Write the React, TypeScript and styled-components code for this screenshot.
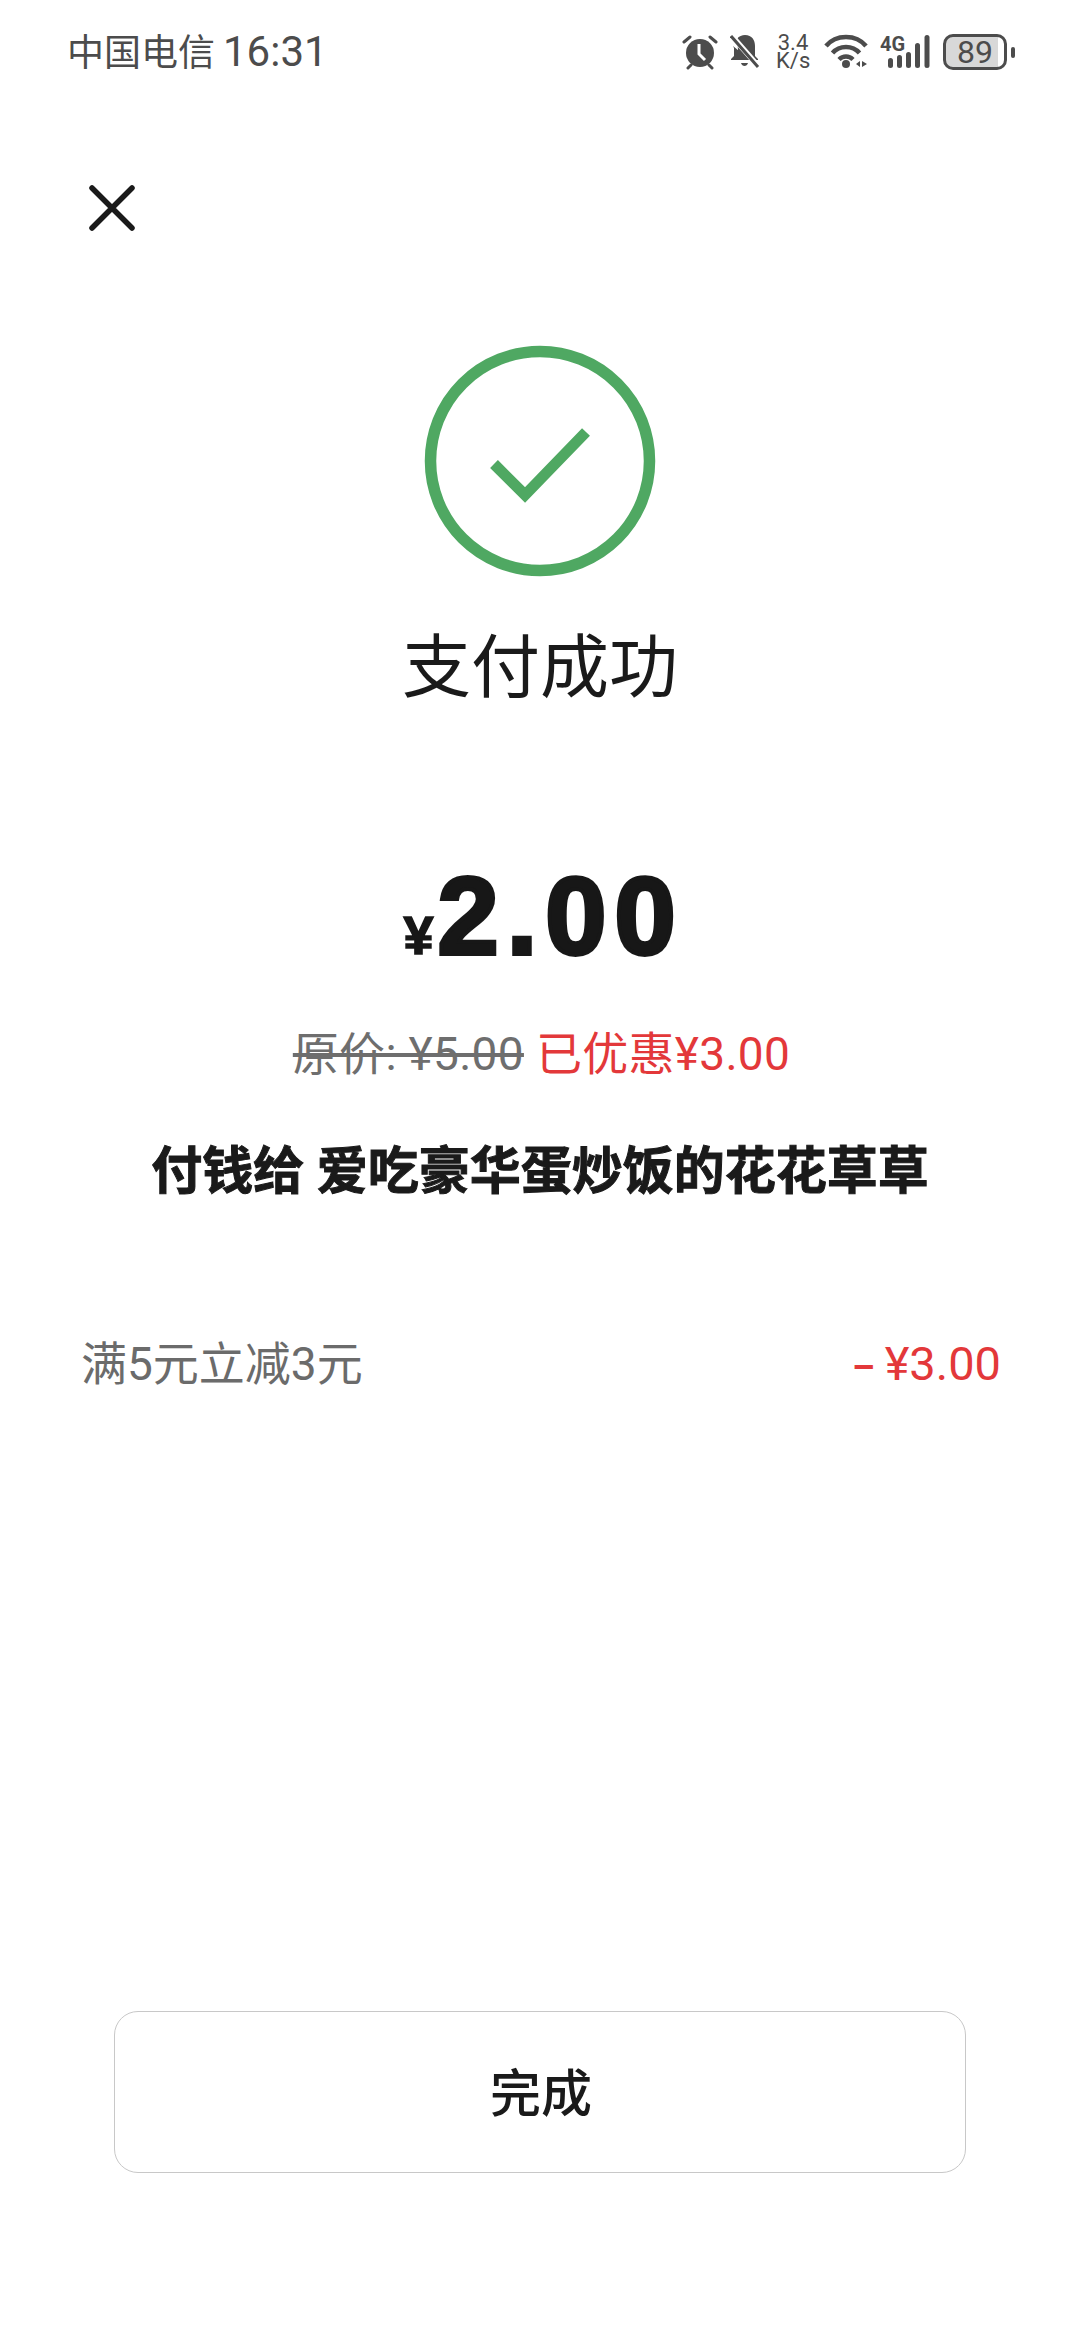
import styled, { createGlobalStyle } from 'styled-components';

const sans = `'Liberation Sans', 'Noto Sans CJK SC', sans-serif`;
const cjk = `Roboto, 'Noto Sans CJK SC', sans-serif`;

const GlobalStyle = createGlobalStyle`
  html, body {
    margin: 0;
    padding: 0;
    background: #fff;
  }
`;

const Page = styled.div`
  width: 1080px;
  height: 2340px;
  display: flex;
  flex-direction: column;
  background: #fff;
  font-family: ${cjk};
  overflow: hidden;
`;

const StatusBar = styled.div`
  height: 52px;
  margin-top: 26px;
  padding: 0 65px 0 67px;
  display: flex;
  justify-content: space-between;
  align-items: center;
  color: #4c4c4c;
`;

const Carrier = styled.div`
  margin-top: 2px;
  font-size: 37px;
  line-height: 52px;
  white-space: nowrap;
`;

const Clock = styled.span`
  margin-left: 8px;
  font-size: 42px;
`;

const StatusIcons = styled.div`
  display: flex;
  align-items: center;
`;

const NetSpeed = styled.div`
  width: 34px;
  margin: 0 14px 0 16px;
  font-size: 22px;
  line-height: 18px;
  text-align: center;
`;

const Battery = styled.div`
  width: 64px;
  height: 36px;
  margin-left: 13px;
  box-sizing: border-box;
  border: 3px solid #4c4c4c;
  border-radius: 10px;
  font-size: 32px;
  line-height: 30px;
  text-align: center;
  background: linear-gradient(to right, #d8d8d8 89%, #fff 89%);
`;

const BatteryCap = styled.div`
  width: 4px;
  height: 11px;
  margin-left: 4px;
  border-radius: 2px;
  background: #4c4c4c;
`;

const CloseButton = styled.div`
  width: 48px;
  height: 48px;
  margin: 106px 0 0 88px;
`;

const Result = styled.div`
  margin-top: 113px;
  display: flex;
  flex-direction: column;
  align-items: center;
`;

const Title = styled.h1`
  margin: 52px 0 0;
  height: 80px;
  font-size: 69px;
  line-height: 80px;
  font-weight: 400;
  color: #1a1a1a;
`;

const Amount = styled.div`
  margin-top: 146px;
  height: 122px;
  padding-left: 7px;
  display: flex;
  align-items: baseline;
  justify-content: center;
  font-family: ${sans};
  font-weight: 700;
  color: #171717;
`;

const Currency = styled.span`
  margin-right: 4px;
  font-size: 54px;
  -webkit-text-stroke: 1.5px #171717;
`;

const Integer = styled.span`
  font-size: 110px;
  line-height: 122px;
  letter-spacing: 8px;
  -webkit-text-stroke: 4px #171717;
`;

const PriceLine = styled.div`
  margin-top: 47px;
  padding-left: 3px;
  display: flex;
  gap: 12px;
  font-size: 46px;
  line-height: 60px;
  letter-spacing: 0.3px;
`;

const OldPrice = styled.span`
  color: #6e6e6e;
  text-decoration: line-through;
`;

const Saved = styled.span`
  color: #e3383a;
`;

const Payee = styled.div`
  margin-top: 56px;
  font-size: 51px;
  line-height: 64px;
  font-weight: 700;
  color: #1a1a1a;
  white-space: pre;
  -webkit-text-stroke: 1px #1a1a1a;
`;

const DiscountRow = styled.div`
  margin: 130px 79px 0 81px;
  display: flex;
  justify-content: space-between;
  font-size: 46px;
  line-height: 60px;
`;

const DiscountName = styled.span`
  color: #6b6b6b;
`;

const DiscountValue = styled.span`
  color: #e3383a;
  font-size: 47px;
`;

const Dash = styled.span`
  margin-right: 10px;
  font-size: 36px;
  font-weight: 700;
`;

const DoneButton = styled.button`
  display: block;
  flex-shrink: 0;
  width: 852px;
  height: 162px;
  margin: auto 0 167px 114px;
  padding: 0 0 4px 2px;
  box-sizing: border-box;
  border: 1px solid #c8c8c8;
  border-radius: 24px;
  background: #fff;
  font-family: ${cjk};
  font-size: 51px;
  font-weight: 500;
  color: #1a1a1a;
`;

export default function App() {
  return (
    <Page>
      <GlobalStyle />
      <StatusBar>
        <Carrier>
          中国电信<Clock>16:31</Clock>
        </Carrier>
        <StatusIcons>
          <svg width="36" height="38" viewBox="0 0 36 38" fill="#4c4c4c" style={{ marginRight: 12 }}>
            <circle cx="18" cy="20" r="14" />
            <path d="M17 11v10l6 6" fill="none" stroke="#fff" strokeWidth="3" />
            <path d="M2 9l6-5M34 9l-6-5M6 35l3-3M30 35l-3-3" stroke="#4c4c4c" strokeWidth="3" strokeLinecap="round" />
          </svg>
          <svg width="30" height="38" viewBox="0 0 30 38" fill="#4c4c4c">
            <path d="M7 6c2-3 5-4 8-4 7 0 10 5 10 11v10l3 3v1H9zM3 13l17 14H1v-1l3-3v-8zM11 30h7c-1 4-6 4-7 0z" />
            <path d="M2 3l26 30" stroke="#fff" strokeWidth="5.5" />
            <path d="M1 3l27 31" stroke="#4c4c4c" strokeWidth="3" />
          </svg>
          <NetSpeed>
            3.4
            <br />
            K/s
          </NetSpeed>
          <svg width="44" height="38" viewBox="0 0 44 38" fill="none" stroke="#4c4c4c" strokeWidth="4.5">
            <path d="M2 13C12 1 32 1 42 13" />
            <path d="M8.5 20c7-8 20-8 27 0" />
            <path d="M15 26.5c4-4 10-4 14 0" />
            <circle cx="22" cy="31" r="4" fill="#4c4c4c" stroke="none" />
            <path d="M36 28v6l-4-3zM38 28l5 3-5 3z" fill="#4c4c4c" stroke="none" />
          </svg>
          <svg width="50" height="38" viewBox="0 0 50 38" fill="#4c4c4c" style={{ marginLeft: 12 }}>
            <text x="0" y="18" fontSize="20" fontWeight="700" fontFamily="Roboto, sans-serif">4G</text>
            <rect x="8" y="25" width="5" height="10" rx="2.5" />
            <rect x="17" y="22" width="5" height="13" rx="2.5" />
            <rect x="26" y="19" width="5" height="16" rx="2.5" />
            <rect x="35" y="10" width="5" height="25" rx="2.5" />
            <rect x="44.5" y="2" width="5" height="33" rx="2.5" />
          </svg>
          <Battery>89</Battery>
          <BatteryCap />
        </StatusIcons>
      </StatusBar>

      <CloseButton>
        <svg width="48" height="48" viewBox="0 0 48 48" stroke="#1a1a1a" strokeWidth="5.5" strokeLinecap="round">
          <path d="M4 4l40 40M44 4L4 44" />
        </svg>
      </CloseButton>

      <Result>
        <svg width="232" height="232" viewBox="0 0 232 232" fill="none" stroke="#4fa862" strokeWidth="11.5">
          <circle cx="116" cy="116" r="109.5" />
          <path d="M70 119l31 31 61-63" strokeWidth="11" />
        </svg>
        <Title>支付成功</Title>
        <Amount>
          <Currency>¥</Currency>
          <Integer>2.00</Integer>
        </Amount>
        <PriceLine>
          <OldPrice>原价: ¥5.00</OldPrice>
          <Saved>已优惠¥3.00</Saved>
        </PriceLine>
        <Payee>付钱给 爱吃豪华蛋炒饭的花花草草</Payee>
      </Result>

      <DiscountRow>
        <DiscountName>满5元立减3元</DiscountName>
        <DiscountValue>
          <Dash>–</Dash>¥3.00
        </DiscountValue>
      </DiscountRow>

      <DoneButton>完成</DoneButton>
    </Page>
  );
}
